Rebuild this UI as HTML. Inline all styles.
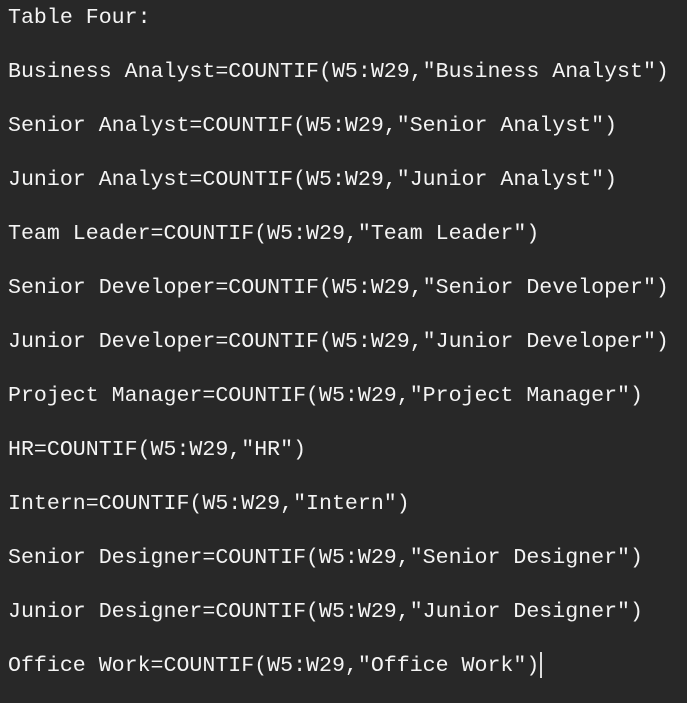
<!DOCTYPE html>
<html><head><style>
html,body{margin:0;padding:0;background:#282828;width:687px;height:693px;overflow:hidden}
.w{position:absolute;left:8px;top:1px;font-family:"Liberation Mono",monospace;font-size:21.6px;color:#f4f4f4}
.l{height:54px;line-height:34px;white-space:pre}
.c{display:inline-block;width:2px;height:26px;background:#ddd;vertical-align:middle;margin-left:1px}
</style></head><body><div class="w">
<div class="l">Table Four:</div>
<div class="l">Business Analyst=COUNTIF(W5:W29,"Business Analyst")</div>
<div class="l">Senior Analyst=COUNTIF(W5:W29,"Senior Analyst")</div>
<div class="l">Junior Analyst=COUNTIF(W5:W29,"Junior Analyst")</div>
<div class="l">Team Leader=COUNTIF(W5:W29,"Team Leader")</div>
<div class="l">Senior Developer=COUNTIF(W5:W29,"Senior Developer")</div>
<div class="l">Junior Developer=COUNTIF(W5:W29,"Junior Developer")</div>
<div class="l">Project Manager=COUNTIF(W5:W29,"Project Manager")</div>
<div class="l">HR=COUNTIF(W5:W29,"HR")</div>
<div class="l">Intern=COUNTIF(W5:W29,"Intern")</div>
<div class="l">Senior Designer=COUNTIF(W5:W29,"Senior Designer")</div>
<div class="l">Junior Designer=COUNTIF(W5:W29,"Junior Designer")</div>
<div class="l">Office Work=COUNTIF(W5:W29,"Office Work")<span class="c"></span></div>
</div></body></html>
